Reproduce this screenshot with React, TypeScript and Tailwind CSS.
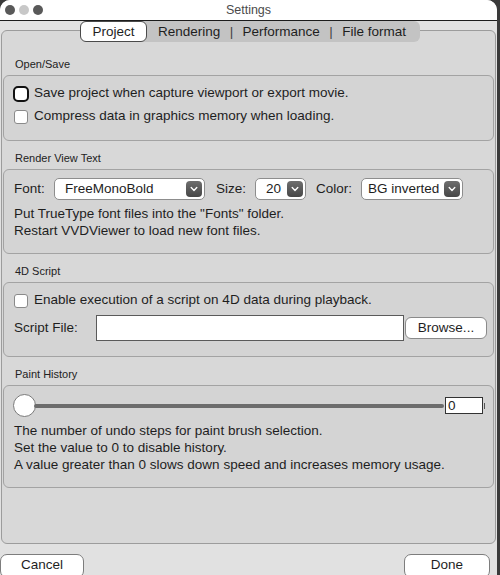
import type { ReactNode } from 'react'

function Checkbox({ focused = false }: { focused?: boolean }) {
  if (focused) {
    return (
      <span className="w-[16px] h-[16px] rounded-[5px] border-[2.5px] border-[#111] bg-white shrink-0 -ml-[1px] mr-[5px]" />
    )
  }
  return <span className="w-[14px] h-[14px] rounded-[3px] border border-[#8a8a8a] bg-white shrink-0 mr-[6px]" />
}

function Select({ value, className }: { value: string; className: string }) {
  return (
    <div
      className={`${className} h-[22px] bg-white border border-[#8d8d8d] rounded-[5px] flex items-center justify-between pr-[2px] shrink-0`}
    >
      <span className="text-[13.5px] leading-none whitespace-nowrap">{value}</span>
      <span className="w-[16px] h-[16px] rounded-[4px] bg-gradient-to-b from-[#6f6f6f] to-[#464646] flex items-center justify-center shrink-0">
        <svg width="8" height="6" viewBox="0 0 8 6" fill="none">
          <path d="M1.2 1.6 L4 4.4 L6.8 1.6" stroke="white" strokeWidth="1.4" strokeLinecap="round" strokeLinejoin="round" />
        </svg>
      </span>
    </div>
  )
}

function Group({ title, className, children }: { title: string; className: string; children: ReactNode }) {
  return (
    <div className="flex flex-col">
      <div className="text-[11px] leading-[14px] text-[#222] pl-[12px] mb-[4px]">{title}</div>
      <div className={`border border-[#a3a3a3] rounded-[6px] bg-[#d4d4d4] px-[10px] ${className}`}>{children}</div>
    </div>
  )
}

export default function App() {
  return (
    <div className="w-[500px] h-[575px] bg-[#3a3a3a] font-['Liberation_Sans',Arial,sans-serif] text-[#1e1e1e] overflow-hidden">
      <div className="w-[497px] h-[575px] bg-[#e1e1e1] rounded-t-[10px] flex flex-col overflow-hidden">
        {/* title bar */}
        <div className="relative h-[21px] bg-white border-b border-[#1c1c1c] flex items-center justify-center shrink-0">
          <div className="absolute left-[5px] top-[5px] flex gap-[4px]">
            <span className="w-[10px] h-[10px] rounded-full bg-[#595959]" />
            <span className="w-[10px] h-[10px] rounded-full bg-[#c8c8c8]" />
            <span className="w-[10px] h-[10px] rounded-full bg-[#595959]" />
          </div>
          <span className="text-[12.5px] text-[#4b4b4b]">Settings</span>
        </div>

        {/* tabs */}
        <div className="relative z-10 h-[21px] flex pl-[80px] shrink-0">
          <div className="w-[340px] flex items-stretch h-[21px] bg-[#c3c3c3] rounded-[6px] text-[13.5px] leading-none">
            <div className="w-[67px] bg-white border border-[#4a4a4a] rounded-[6px] flex items-center justify-center">
              Project
            </div>
            <div className="flex-1 flex items-center justify-between pl-[11px] pr-[14px]">
              <span>Rendering</span>
              <span className="text-[#444]">|</span>
              <span>Performance</span>
              <span className="text-[#444]">|</span>
              <span>File format</span>
            </div>
          </div>
        </div>

        {/* pane */}
        <div className="-mt-[12px] mx-[1px] h-[514px] border border-[#9c9c9c] rounded-[6px] bg-[#d8d8d8] px-[1px] pt-[26px] flex flex-col gap-[10px] shrink-0">
          <Group title="Open/Save" className="pt-[6px] pb-[12px]">
            <div className="h-[23px] flex items-center text-[13.5px]">
              <Checkbox focused />
              <span>Save project when capture viewport or export movie.</span>
            </div>
            <div className="h-[23px] flex items-center text-[13.5px]">
              <Checkbox />
              <span>Compress data in graphics memory when loading.</span>
            </div>
          </Group>

          <Group title="Render View Text" className="pt-[7px] pb-[14px]">
            <div className="h-[24px] flex items-center text-[13.5px]">
              <span className="w-[40px]">Font:</span>
              <Select value="FreeMonoBold" className="w-[151px] pl-[10px]" />
              <span className="ml-[11px] w-[39px]">Size:</span>
              <Select value="20" className="w-[51px] pl-[10px]" />
              <span className="ml-[10px] w-[45px]">Color:</span>
              <Select value="BG inverted" className="w-[102px] pl-[6px]" />
            </div>
            <div className="mt-[4px] text-[13.5px] leading-[17px]">
              <div>Put TrueType font files into the "Fonts" folder.</div>
              <div>Restart VVDViewer to load new font files.</div>
            </div>
          </Group>

          <Group title="4D Script" className="pt-[6px] pb-[15px]">
            <div className="h-[23px] flex items-center text-[13.5px]">
              <Checkbox />
              <span>Enable execution of a script on 4D data during playback.</span>
            </div>
            <div className="mt-[3px] h-[26px] flex items-center text-[13.5px]">
              <span className="w-[82px] shrink-0">Script File:</span>
              <div className="w-[308px] h-[26px] bg-white border border-[#5a5a5a] shrink-0" />
              <div className="ml-[1px] w-[82px] h-[22px] bg-white border border-[#8a8a8a] rounded-[6px] flex items-center justify-center shrink-0">
                Browse...
              </div>
            </div>
          </Group>

          <Group title="Paint History" className="pt-[8px] pb-[14px] pl-[9px]">
            <div className="h-[23px] flex items-center">
              <span className="w-[23px] h-[23px] rounded-full bg-white border border-[#7a7a7a] shrink-0" />
              <div className="-ml-[2px] mr-[1px] w-[410px] h-[4px] bg-[#6c6c6c] rounded-full shrink-0" />
              <div className="w-[38px] h-[17px] bg-white border border-[#333] text-[13.5px] leading-none flex items-center pl-[2px] shrink-0">
                0
              </div>
              <span className="ml-[1px] w-[1px] h-[6px] bg-[#555] shrink-0" />
            </div>
            <div className="mt-[5px] text-[13.5px] leading-[17px] pl-[1px]">
              <div>The number of undo steps for paint brush selection.</div>
              <div>Set the value to 0 to disable history.</div>
              <div>A value greater than 0 slows down speed and increases memory usage.</div>
            </div>
          </Group>
        </div>

        {/* buttons */}
        <div className="mt-[10px] flex justify-between pr-[7px] text-[13.5px]">
          <div className="w-[84px] h-[24px] bg-white border border-[#7d7d7d] rounded-[7px] flex items-center justify-center pb-[2px]">
            Cancel
          </div>
          <div className="w-[86px] h-[24px] bg-white border border-[#7d7d7d] rounded-[7px] flex items-center justify-center pb-[2px]">
            Done
          </div>
        </div>
      </div>
    </div>
  )
}
